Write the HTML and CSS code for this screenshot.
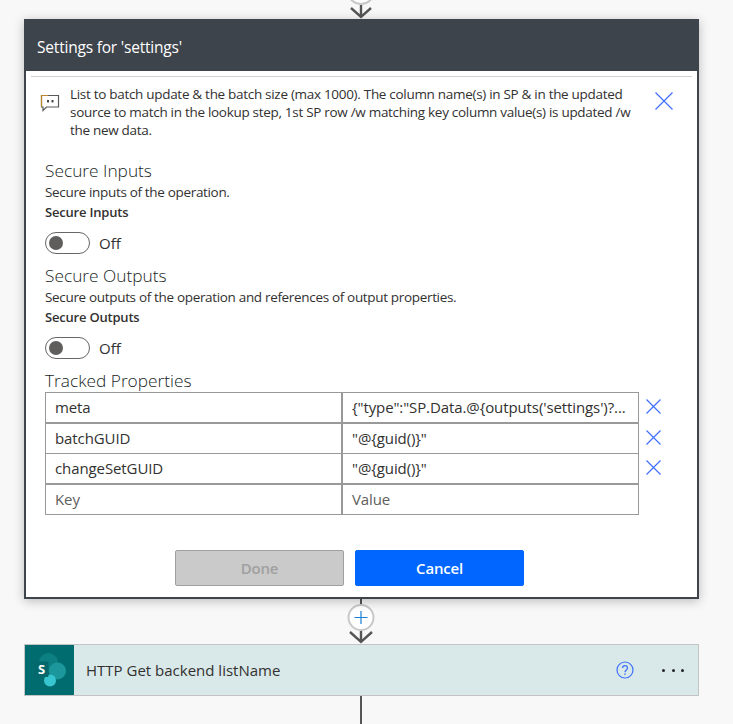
FILE: index.html
```html
<!DOCTYPE html>
<html lang="en">
<head>
  <meta charset="UTF-8">
  <meta name="viewport" content="width=device-width, initial-scale=1.0">
  <title>Settings for 'settings'</title>
  <link rel="stylesheet" href="styles.css">
</head>
<body>
  <div class="flow">
    <!-- connector above the card -->
    <div class="link link-top">
      <svg class="link-art" width="30" height="19" viewBox="0 0 30 19">
        <circle cx="15" cy="-9" r="13" fill="#fff" stroke="#c8c8c8" stroke-width="2"/>
        <path d="M15 5V17M5 8L15 17L25 8" fill="none" stroke="#555" stroke-width="2.4"/>
      </svg>
    </div>

    <section class="card">
      <header class="card-head">Settings for 'settings'</header>
      <div class="card-body">
        <div class="note">
          <svg class="note-icon" width="20" height="18" viewBox="0 0 20 18">
            <path d="M1.5 1.5H18.5V13H6.5L3 16.5V13H1.5Z" fill="none" stroke="#5b5b5b" stroke-width="1.2"/>
            <path d="M1.5 13V1.5H8" fill="none" stroke="#b9852e" stroke-width="1.2"/>
            <rect x="7" y="6" width="2" height="2.4" fill="#444"/>
            <rect x="11.5" y="6" width="2" height="2.4" fill="#444"/>
          </svg>
          <p class="note-text">List to batch update &amp; the batch size (max 1000). The column name(s) in SP &amp; in the updated<br>source to match in the lookup step, 1st SP row /w matching key column value(s) is updated /w<br>the new data.</p>
          <svg class="note-close" width="18" height="18" viewBox="0 0 18 18">
            <path d="M0.5 0.5L17.5 17.5M17.5 0.5L0.5 17.5" stroke="#3f6fff" stroke-width="1.2"/>
          </svg>
        </div>

        <div class="field">
          <h2 class="field-title">Secure Inputs</h2>
          <p class="field-desc">Secure inputs of the operation.</p>
          <div class="field-label">Secure Inputs</div>
          <div class="toggle-row">
            <span class="toggle"><span class="knob"></span></span>
            <span class="toggle-text">Off</span>
          </div>
        </div>

        <div class="field">
          <h2 class="field-title">Secure Outputs</h2>
          <p class="field-desc">Secure outputs of the operation and references of output properties.</p>
          <div class="field-label">Secure Outputs</div>
          <div class="toggle-row">
            <span class="toggle"><span class="knob"></span></span>
            <span class="toggle-text">Off</span>
          </div>
        </div>

        <h2 class="field-title">Tracked Properties</h2>
        <div class="props">
          <div class="prop-row">
            <div class="prop-cell">meta</div>
            <div class="prop-cell">{"type":"SP.Data.@{outputs('settings')?...</div>
            <svg class="prop-del" width="15" height="15" viewBox="0 0 15 15"><path d="M0.5 0.5L14.5 14.5M14.5 0.5L0.5 14.5" stroke="#3f6fff" stroke-width="1.2"/></svg>
          </div>
          <div class="prop-row">
            <div class="prop-cell">batchGUID</div>
            <div class="prop-cell">"@{guid()}"</div>
            <svg class="prop-del" width="15" height="15" viewBox="0 0 15 15"><path d="M0.5 0.5L14.5 14.5M14.5 0.5L0.5 14.5" stroke="#3f6fff" stroke-width="1.2"/></svg>
          </div>
          <div class="prop-row">
            <div class="prop-cell">changeSetGUID</div>
            <div class="prop-cell">"@{guid()}"</div>
            <svg class="prop-del" width="15" height="15" viewBox="0 0 15 15"><path d="M0.5 0.5L14.5 14.5M14.5 0.5L0.5 14.5" stroke="#3f6fff" stroke-width="1.2"/></svg>
          </div>
          <div class="prop-row">
            <div class="prop-cell placeholder">Key</div>
            <div class="prop-cell placeholder">Value</div>
          </div>
        </div>

        <div class="actions">
          <button class="btn btn-done" disabled>Done</button>
          <button class="btn btn-cancel">Cancel</button>
        </div>
      </div>
    </section>

    <!-- connector with the insert button -->
    <div class="link link-mid">
      <svg class="link-art" width="30" height="45" viewBox="0 0 30 45">
        <path d="M15 0V6" stroke="#555" stroke-width="2"/>
        <circle cx="15" cy="18.5" r="12.5" fill="#fff" stroke="#c8c8c8" stroke-width="2"/>
        <path d="M15 12V25M8.5 18.5H21.5" stroke="#1a7fd6" stroke-width="1.2"/>
        <path d="M4 33L15 43L26 33M15 32V43" fill="none" stroke="#555" stroke-width="2.4"/>
      </svg>
    </div>

    <section class="node">
      <div class="node-icon">
        <svg width="34" height="34" viewBox="0 0 34 34">
          <circle cx="15.5" cy="9.5" r="9.5" fill="#0b7f82"/>
          <circle cx="24.5" cy="18" r="8.5" fill="#1c979c"/>
          <circle cx="17" cy="27.5" r="6" fill="#37c6d0"/>
          <rect x="1.5" y="8.5" width="14" height="15.5" rx="1" fill="#03686b"/>
          <text x="8.5" y="21" class="node-icon-s">S</text>
        </svg>
      </div>
      <div class="node-title">HTTP Get backend listName</div>
      <svg class="node-help" width="18" height="18" viewBox="0 0 18 18">
        <circle cx="9" cy="9" r="8" fill="none" stroke="#3f6fff" stroke-width="1.2"/>
        <path d="M6.5 7C6.5 3.8 11.5 3.8 11.5 7C11.5 9 9 9 9 11.2" fill="none" stroke="#3f6fff" stroke-width="1.2"/>
        <rect x="8.3" y="12.5" width="1.4" height="1.4" fill="#3f6fff"/>
      </svg>
      <div class="node-more"><span></span><span></span><span></span></div>
    </section>

    <div class="link link-end"></div>
  </div>
</body>
</html>
```

FILE: styles.css
```css
body {
  margin: 0;
  background-color: #f8f8f8;
  color: #323130;
  font-family: "Open Sans", "Noto Sans", sans-serif;
  overflow: hidden;
}
p, h2 {
  margin: 0;
}
.flow {
  width: 675px;
  margin-left: 24px;
  display: flex;
  flex-direction: column;
  height: 724px;
}

/* connectors */
.link {
  display: flex;
  justify-content: center;
  padding-right: 1px;
}
.link-art {
  display: block;
}
.link-top {
  height: 19px;
}
.link-mid {
  height: 45px;
}
.link-end {
  flex: 1;
}
.link-end::before {
  content: "";
  width: 2px;
  background-color: #555;
}

/* settings card */
.card {
  height: 580px;
  box-sizing: border-box;
  background-color: #fff;
  border: 2px solid #3e444c;
  box-shadow: 0 2px 10px rgba(0, 0, 0, 0.25);
  position: relative;
  z-index: 1;
}
.card-head {
  height: 52px;
  margin: -2px -2px 0;
  padding: 0 13px;
  background-color: #3e444c;
  color: #fff;
  font-size: 15.5px;
  line-height: 56px;
  letter-spacing: -0.2px;
}
.card-body {
  padding: 0 5px;
}
.note {
  margin-top: 5px;
  padding: 8px 19px 0 9px;
  height: 83px;
  box-sizing: border-box;
  border-top: 1px solid #d0d0d0;
  display: flex;
  align-items: flex-start;
}
.note-icon {
  margin-top: 9px;
  flex: none;
}
.note-text {
  flex: 1;
  margin-left: 10px;
  font-size: 13.5px;
  line-height: 18px;
  letter-spacing: -0.3px;
  white-space: nowrap;
}
.note-close {
  margin-top: 7px;
  flex: none;
}
.field,
.field-title,
.props,
.actions {
  margin-left: 14px;
}
.field .field-title {
  margin-left: 0;
}
.field-title {
  color: #201f1e;
  font-size: 17.3px;
  font-weight: 300;
  line-height: 24px;
}
.field-desc {
  font-size: 13.5px;
  line-height: 18px;
  letter-spacing: -0.33px;
}
.field-label {
  margin-top: 3px;
  font-size: 13px;
  font-weight: 600;
  line-height: 16px;
  letter-spacing: -0.2px;
}
.toggle-row {
  height: 42px;
  margin-top: 2px;
  display: flex;
  align-items: center;
}
.toggle {
  width: 45px;
  height: 22px;
  box-sizing: border-box;
  border: 1px solid #666;
  border-radius: 11px;
  background-color: #fff;
  display: flex;
  align-items: center;
  padding-left: 3px;
}
.knob {
  width: 14px;
  height: 14px;
  border-radius: 50%;
  background-color: #605e5c;
}
.toggle-text {
  margin-left: 9px;
  font-size: 15px;
}

/* key/value table */
.props {
  width: 594px;
  margin-top: -1px;
  position: relative;
}
.prop-row {
  display: grid;
  grid-template-columns: 296px 298px;
  height: 31px;
  margin-bottom: -0.5px;
  position: relative;
}
.prop-cell {
  box-sizing: border-box;
  border: 1px solid #999;
  margin-right: -1px;
  padding: 0 9px;
  font-size: 15px;
  line-height: 29px;
  letter-spacing: -0.1px;
  white-space: nowrap;
  overflow: hidden;
}
.prop-cell + .prop-cell {
  margin-right: 0;
  border-left-width: 2px;
}
.placeholder {
  color: #605e5c;
}
.prop-del {
  position: absolute;
  left: 601px;
  top: 7px;
}

/* footer buttons */
.actions {
  margin-top: 36px;
  padding-left: 130px;
  display: flex;
  gap: 11px;
}
.btn {
  width: 169px;
  height: 36px;
  box-sizing: border-box;
  border-radius: 2px;
  font-family: inherit;
  font-size: 15px;
  font-weight: 600;
  letter-spacing: -0.2px;
}
.btn-done {
  background-color: #cacaca;
  border: 1px solid #a0a0a0;
  color: #a0a0a0;
}
.btn-cancel {
  background-color: #0066ff;
  border: 1px solid #0066ff;
  color: #fff;
}

/* next action on the canvas */
.node {
  height: 52px;
  box-sizing: border-box;
  border: 1px solid #c4c4c4;
  background-color: #d9e8e9;
  display: flex;
  align-items: center;
}
.node-icon {
  width: 49px;
  height: 50px;
  background-color: #006c70;
  display: flex;
  align-items: center;
  justify-content: center;
}
.node-icon-s {
  fill: #fff;
  font-size: 13px;
  font-weight: 700;
  text-anchor: middle;
}
.node-title {
  flex: 1;
  margin-left: 12px;
  font-size: 15px;
}
.node-help {
  margin-right: 28px;
}
.node-more {
  display: flex;
  gap: 6.5px;
  margin-right: 14px;
}
.node-more span {
  width: 3px;
  height: 3px;
  border-radius: 50%;
  background-color: #252525;
}
```
